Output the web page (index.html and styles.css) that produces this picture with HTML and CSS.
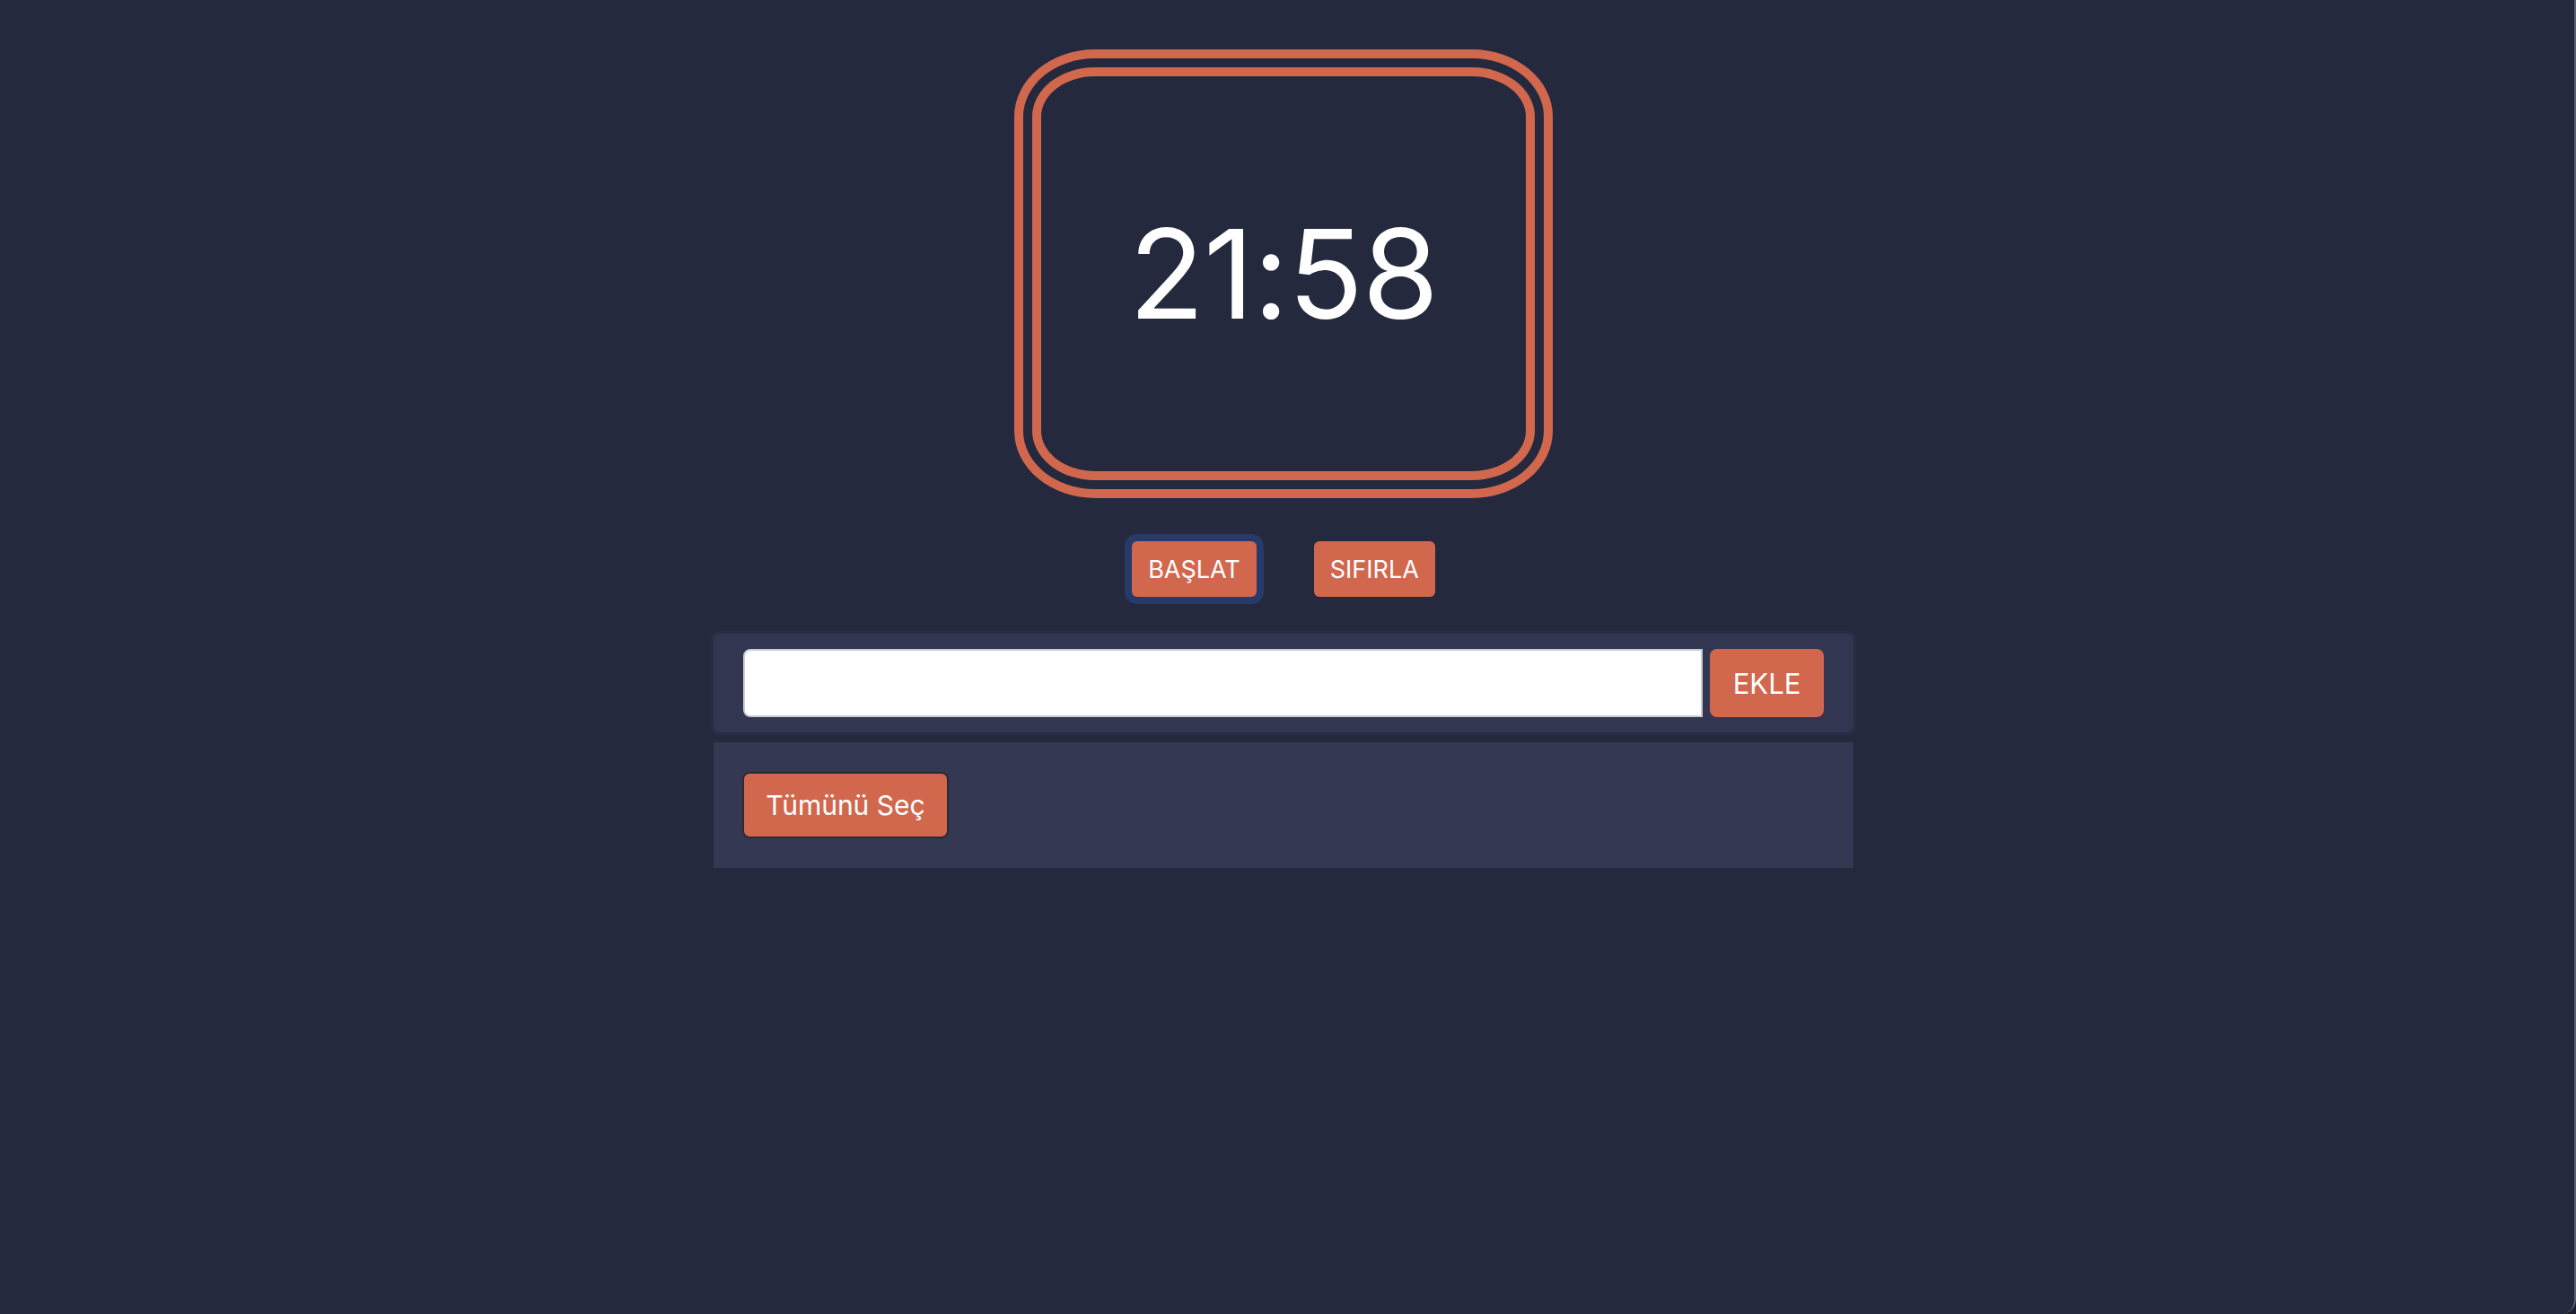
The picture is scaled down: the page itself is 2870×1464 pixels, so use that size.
FILE: index.html
```html
<!DOCTYPE html>
<html lang="tr">
<head>
<meta charset="utf-8">
<title>Pomodoro</title>
<link rel="stylesheet" href="styles.css">
</head>
<body>
<div class="page">
  <div class="clock"><span class="time">21:58</span></div>
  <div class="controls">
    <button class="btn btn-focus">BAŞLAT</button>
    <button class="btn">SIFIRLA</button>
  </div>
  <div class="add-panel">
    <input class="task-input" type="text">
    <button class="add-btn">EKLE</button>
  </div>
  <div class="list-panel">
    <button class="select-all">Tümünü Seç</button>
  </div>
</div>
</body>
</html>
```
FILE: styles.css
```css
html {
  height: 100%;
  background: #1b1e2b;
}
body {
  margin: 0;
  min-height: 100vh;
  box-sizing: border-box;
  background: #24293d;
  border-right: 2px solid #5a5f70;
  padding-right: 8px;
  border-bottom-right-radius: 16px;
  font-family: Inter, "Noto Sans", "Liberation Sans", sans-serif;
  color: #ffffff;
}
.page {
  display: flex;
  flex-direction: column;
  align-items: center;
  padding-top: 55px;
}
.clock {
  width: 600px;
  height: 500px;
  box-sizing: border-box;
  border: 30px double #d1674d;
  border-radius: 15%;
  display: flex;
  align-items: center;
  justify-content: center;
  margin-bottom: 48px;
}
.time {
  font-size: 138px;
  line-height: 1;
  font-weight: 400;
  color: #ffffff;
  letter-spacing: -1px;
}
.controls {
  display: flex;
  gap: 64px;
  margin-bottom: 41px;
}
.btn {
  height: 62px;
  padding: 0 18px;
  border: none;
  border-radius: 6px;
  background: #d1674d;
  color: #ffffff;
  font-family: Inter, "Noto Sans", "Liberation Sans", sans-serif;
  font-size: 27px;
}
.btn-focus {
  box-shadow: 0 0 0 8px #283a69;
}
.add-panel {
  width: 1270px;
  height: 110px;
  box-sizing: border-box;
  padding: 17px 33px;
  background: #323650;
  border-radius: 6px;
  box-shadow: 0 0 0 3px #2a2e44;
  display: flex;
  align-items: center;
  gap: 8px;
  margin-bottom: 11px;
}
.task-input {
  flex: 1;
  height: 76px;
  box-sizing: border-box;
  border: 2px solid #c8cdd5;
  border-radius: 8px 0 0 8px;
  background: #ffffff;
  font-size: 28px;
  outline: none;
}
.add-btn {
  width: 127px;
  height: 76px;
  border: none;
  border-radius: 8px;
  background: #d1674d;
  color: #ffffff;
  font-family: Inter, "Noto Sans", "Liberation Sans", sans-serif;
  font-size: 31px;
}
.list-panel {
  width: 1270px;
  height: 140px;
  box-sizing: border-box;
  padding: 32px;
  background: #353852;
  display: flex;
  align-items: center;
}
.select-all {
  width: 230px;
  height: 74px;
  border: 2px solid #2a2a32;
  border-radius: 8px;
  background: #d1674d;
  color: #ffffff;
  font-family: Inter, "Noto Sans", "Liberation Sans", sans-serif;
  font-size: 30px;
  padding: 0;
}
```
